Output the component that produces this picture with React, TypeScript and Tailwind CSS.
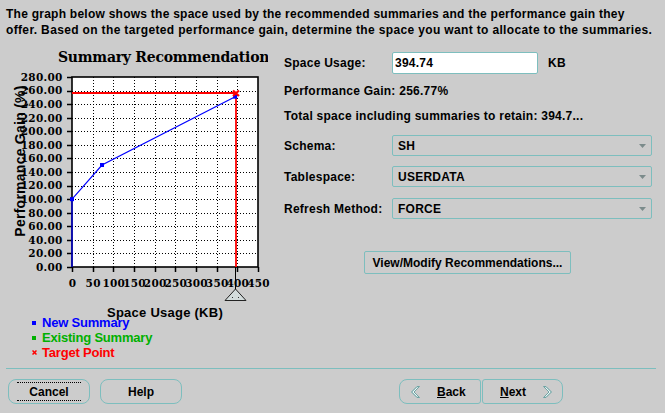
import React from "react";

const X0 = 72, X1 = 258, Y0 = 267, Y1 = 77;
const sx = (v: number) => X0 + (v * (X1 - X0)) / 450;
const sy = (v: number) => Y0 - (v * (Y0 - Y1)) / 280;

function Chart() {
  const yVals = Array.from({ length: 15 }, (_, i) => i * 20);
  const xVals = Array.from({ length: 10 }, (_, i) => i * 50);
  const pts: [number, number][] = [[0, 0], [0, 100], [72.6, 150.3], [394.74, 251]];
  const serif = "'DejaVu Serif', serif";
  const sans = "'Liberation Sans', Arial, sans-serif";
  return (
    <svg width="268" height="280" viewBox="0 38 268 280" className="block overflow-visible">
      <defs>
        <clipPath id="titleClip">
          <rect x="0" y="38" width="268" height="40" />
        </clipPath>
      </defs>
      <text x="58" y="62" fontFamily={serif} fontWeight="bold" fontSize="14" letterSpacing="-0.25" fill="#000" clipPath="url(#titleClip)">
        Summary Recommendations
      </text>
      <rect x={X0} y={Y1} width={X1 - X0} height={Y0 - Y1} fill="#fff" />
      {yVals.slice(1, 14).map((v) => (
        <line key={"gy" + v} x1={X0} x2={X1} y1={Math.round(sy(v)) + 0.5} y2={Math.round(sy(v)) + 0.5}
          stroke="#000" strokeWidth="1" strokeDasharray="1 2" shapeRendering="crispEdges" />
      ))}
      {xVals.slice(1, 9).map((v) => (
        <line key={"gx" + v} y1={Y1} y2={Y0} x1={Math.round(sx(v)) + 0.5} x2={Math.round(sx(v)) + 0.5}
          stroke="#000" strokeWidth="1" strokeDasharray="1 2" shapeRendering="crispEdges" />
      ))}
      <rect x={X0} y={Y1} width={X1 - X0} height={Y0 - Y1} fill="none" stroke="#000" strokeWidth="1.6" />
      {yVals.map((v) => (
        <g key={"yl" + v}>
          <line x1={67} x2={X0} y1={Math.round(sy(v)) + 0.5} y2={Math.round(sy(v)) + 0.5} stroke="#000" strokeWidth="1.5" />
          <text x="62.5" y={sy(v) + 3.8} textAnchor="end" fontFamily={serif} fontWeight="bold" fontSize="10.5" fill="#000">
            {v.toFixed(2)}
          </text>
        </g>
      ))}
      {xVals.map((v) => (
        <g key={"xl" + v}>
          <line y1={Y0} y2={272} x1={Math.round(sx(v)) + 0.5} x2={Math.round(sx(v)) + 0.5} stroke="#000" strokeWidth="1.5" />
          <text x={sx(v) + 0.5} y="287" textAnchor="middle" fontFamily={serif} fontWeight="bold" fontSize="10.5" fill="#000">
            {v}
          </text>
        </g>
      ))}
      {/* target lines */}
      <line x1={X0} x2={237} y1={93} y2={93} stroke="#ff0000" strokeWidth="1.8" />
      <line x1={236} x2={236} y1={92} y2={Y0} stroke="#ff0000" strokeWidth="1.8" />
      {/* series */}
      <polyline points={pts.map(([x, y]) => `${sx(x)},${sy(y)}`).join(" ")} fill="none" stroke="#0000ff" strokeWidth="1.2" />
      {pts.slice(1).map(([x, y], i) => (
        <rect key={"m" + i} x={sx(x) - 2} y={sy(y) - 2} width="4" height="4" fill="#0000ff" />
      ))}
      <path d="M233 90.5 L239 96 M239 90.5 L233 96" stroke="#ff0000" strokeWidth="2.2" />
      {/* slider */}
      <line x1={235.5} x2={235.5} y1={Y0} y2={290} stroke="#000" strokeWidth="1" />
      <polygon points="235.5,289 225,300.5 246,300.5" fill="#d3dcdc" stroke="#222" strokeWidth="1" />
      <rect x="232" y="297" width="1" height="1" fill="#333" />
      <rect x="238" y="297" width="1" height="1" fill="#333" />
      {/* axis titles */}
      <text transform="translate(25,161) rotate(-90)" textAnchor="middle" fontFamily={sans} fontWeight="bold" fontSize="14" fill="#000">
        Performance Gain (%)
      </text>
      <text x="165" y="317" textAnchor="middle" fontFamily={sans} fontWeight="bold" fontSize="13" fill="#000">
        Space Usage (KB)
      </text>
    </svg>
  );
}

function SelectBox({ value }: { value: string }) {
  return (
    <div className="w-[260px] h-[21px] border border-[#7dbebe] rounded-[2px] flex items-center justify-between pl-[5px] pr-[5px]">
      <span>{value}</span>
      <svg width="7" height="4" viewBox="0 0 7 4">
        <polygon points="0,0 7,0 3.5,4" fill="#7b8b8b" />
      </svg>
    </div>
  );
}

function Chevron({ dir }: { dir: "left" | "right" }) {
  const d = dir === "left"
    ? "M8.5 0.5 L3 6 L8.5 11.5 L6 11.5 L0.5 6 L6 0.5 Z"
    : "M1.5 0.5 L7 6 L1.5 11.5 L4 11.5 L9.5 6 L4 0.5 Z";
  const hl = dir === "left" ? "M6.5 1.5 L2 6 L6.5 10.5" : "M3.5 1.5 L8 6 L3.5 10.5";
  return (
    <svg width="10" height="12" viewBox="0 0 10 12">
      <path d={d} fill="#a9d0d0" stroke="#6fa3a3" strokeWidth="1" />
      <path d={hl} fill="none" stroke="#eef7f7" strokeWidth="1" />
    </svg>
  );
}

export default function App() {
  return (
    <div className="w-[665px] h-[413px] bg-[#cccccc] overflow-hidden text-black font-['Liberation_Sans',Arial,sans-serif] text-[12px] font-bold tracking-[0.25px] flex flex-col">
      <p className="h-[38px] px-[6px] pt-[6px] leading-[16px] whitespace-nowrap">
        The graph below shows the space used by the recommended summaries and the performance gain they
        <br />
        <span className="tracking-[0.35px]">offer. Based on the targeted performance gain, determine the space you want to allocate to the summaries.</span>
      </p>
      <div className="h-[330px] flex">
        <div className="w-[268px] flex flex-col">
          <Chart />
          <div className="-mt-[3px] pl-[32px] text-[13px] leading-[15px] tracking-[-0.2px]">
            <div className="flex items-center text-[#0000ff]">
              <span className="w-[4px] h-[4px] bg-[#0000ff]" />
              <span className="ml-[6px]">New Summary</span>
            </div>
            <div className="flex items-center text-[#00b000]">
              <span className="w-[4px] h-[4px] bg-[#00b000]" />
              <span className="ml-[6px]">Existing Summary</span>
            </div>
            <div className="flex items-center text-[#ff0000]">
              <svg width="5" height="5" viewBox="0 0 5 5" className="-ml-[0.5px]">
                <path d="M0.5 0.5 L4.5 4.5 M4.5 0.5 L0.5 4.5" stroke="#ff0000" strokeWidth="1.5" />
              </svg>
              <span className="ml-[5.5px]">Target Point</span>
            </div>
          </div>
        </div>
        <div className="flex-1 pl-[16px] flex flex-col leading-[16px]">
          <div className="mt-[14px] h-[22px] flex items-center">
            <span className="w-[108px]">Space Usage:</span>
            <input
              readOnly
              value="394.74"
              className="w-[146px] h-[22px] bg-white border border-[#7dbebe] rounded-[2px] px-[2px] text-[12px] font-bold text-black outline-none font-['Liberation_Sans',Arial,sans-serif] tracking-[0.25px]"
            />
            <span className="ml-[10px]">KB</span>
          </div>
          <div className="mt-[9px]">Performance Gain: 256.77%</div>
          <div className="mt-[9px]">Total space including summaries to retain: 394.7...</div>
          <div className="mt-[11px] flex items-center">
            <span className="w-[108px]">Schema:</span>
            <SelectBox value="SH" />
          </div>
          <div className="mt-[10px] flex items-center">
            <span className="w-[108px]">Tablespace:</span>
            <SelectBox value="USERDATA" />
          </div>
          <div className="mt-[11px] flex items-center">
            <span className="w-[108px]">Refresh Method:</span>
            <SelectBox value="FORCE" />
          </div>
          <div className="mt-[32px] ml-[80px] w-[207px] h-[23px] border border-[#7dbebe] rounded-[2px] flex items-center justify-center tracking-[0px]">
            View/Modify Recommendations...
          </div>
        </div>
      </div>
      <div className="mx-[6px] w-[650px] h-px bg-[#7dbebe]" />
      <div className="mt-[10px] flex pl-[8px] tracking-[0px]">
        <div className="w-[82px] h-[25px] border border-[#7dbebe] rounded-[8px] px-[8px] py-[2px] flex">
          <div className="flex-1 border-y border-dotted border-black flex items-center justify-center">Cancel</div>
        </div>
        <div className="ml-[10px] w-[82px] h-[25px] border border-[#7dbebe] rounded-[8px] flex items-center justify-center">
          Help
        </div>
        <div className="ml-[217px] flex gap-[1px]">
          <div className="w-[82px] h-[25px] border border-[#7dbebe] rounded-l-[8px] rounded-r-[3px] flex items-center pl-[11px]">
            <Chevron dir="left" />
            <span className="ml-[16px]"><span className="underline">B</span>ack</span>
          </div>
          <div className="w-[81px] h-[25px] border border-[#7dbebe] rounded-r-[8px] rounded-l-[3px] flex items-center pl-[17px]">
            <span><span className="underline">N</span>ext</span>
            <span className="ml-[16px]"><Chevron dir="right" /></span>
          </div>
        </div>
      </div>
    </div>
  );
}
